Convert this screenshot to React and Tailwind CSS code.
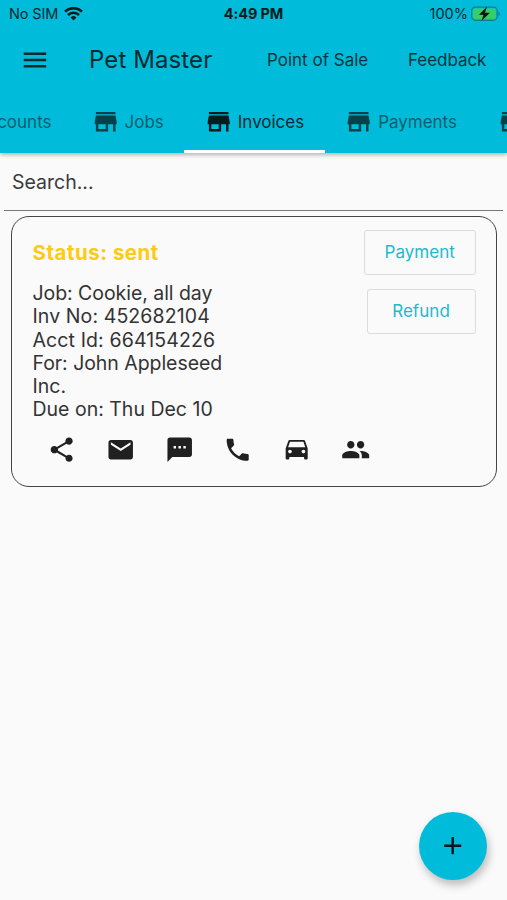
import React from "react";
import {
  MdAdd,
  MdEmail,
  MdMenu,
  MdPeople,
  MdPhone,
  MdShare,
  MdTextsms,
} from "react-icons/md";

function StoreIcon({ className }) {
  return (
    <svg viewBox="0 0 24 24" fill="currentColor" className={className}>
      <path d="M20 4H4v2h16V4zm1 10v-2l-1-5H4l-1 5v2h1v6h10v-6h4v6h2v-6h1zm-9 4H6v-4h6v4z" />
    </svg>
  );
}

function CarIcon({ className }) {
  return (
    <svg viewBox="0 0 24 24" fill="currentColor" className={className}>
      <path d="M18.92 5.01C18.72 4.42 18.16 4 17.5 4h-11c-.66 0-1.21.42-1.42 1.01L3 11v8c0 .55.45 1 1 1h1c.55 0 1-.45 1-1v-1h12v1c0 .55.45 1 1 1h1c.55 0 1-.45 1-1v-8l-2.08-5.99zM6.5 15c-.83 0-1.5-.67-1.5-1.5S5.67 12 6.5 12s1.5.67 1.5 1.5S7.33 15 6.5 15zm11 0c-.83 0-1.5-.67-1.5-1.5s.67-1.5 1.5-1.5 1.5.67 1.5 1.5-.67 1.5-1.5 1.5zM5 10l1.5-4.5h11L19 10H5z" />
    </svg>
  );
}

const actions = [
  { label: "Share", Icon: MdShare },
  { label: "Email", Icon: MdEmail },
  { label: "Message", Icon: MdTextsms },
  { label: "Call", Icon: MdPhone },
  { label: "Drive", Icon: CarIcon },
  { label: "Contacts", Icon: MdPeople },
];

function WifiIcon() {
  return (
    <svg width="19" height="14" viewBox="0 0 19 14" fill="none" stroke="#06191c">
      <path d="M1 4.6a12.2 12.2 0 0 1 17 0" strokeWidth="2.6" />
      <path d="M4 8a7.9 7.9 0 0 1 11 0" strokeWidth="2.5" />
      <path d="M9.5 13.4 6.6 10.5a4.1 4.1 0 0 1 5.8 0Z" fill="#06191c" stroke="none" />
    </svg>
  );
}

function BatteryIcon() {
  return (
    <svg width="30" height="16" viewBox="0 0 30 16">
      <rect x="0.6" y="1.1" width="25.6" height="13.2" rx="3.8" fill="none" stroke="#087f90" strokeWidth="1.2" />
      <rect x="2" y="2.5" width="22.8" height="10.4" rx="2.4" fill="#35cf68" />
      <path d="M27.4 5.4v4.6c1.9-.7 1.9-3.9 0-4.6Z" fill="#087f90" />
      <path d="M15.9 0.8 8 8.7h4.5l-2 6.3 8.4-8.2h-4.9Z" fill="#001214" />
    </svg>
  );
}

function StatusBar() {
  return (
    <div className="flex h-7 items-center justify-between text-[14.5px] text-[#06292e]">
      <div className="flex w-[150px] items-center pl-[9px]">
        <span className="w-[55px] whitespace-nowrap tracking-[-0.15px]">No SIM</span>
        <WifiIcon />
      </div>
      <span className="whitespace-nowrap font-bold tracking-[-0.1px] text-[#041d21]">4:49 PM</span>
      <div className="flex w-[150px] items-center justify-end gap-[3px] pr-[6px]">
        <span>100%</span>
        <BatteryIcon />
      </div>
    </div>
  );
}

function Tab({ label, active }) {
  return (
    <div
      className={`flex h-full shrink-0 items-center border-b-[3px] pl-[19.5px] pr-[20.5px] pt-[2px] ${
        active ? "border-white text-[#05282d]" : "border-transparent text-[#075f6b]"
      }`}
    >
      <StoreIcon className={`size-[29.4px] ${active ? "text-[#041b1f]" : "text-[#04414a]"}`} />
      <span className="ml-[4.7px] whitespace-nowrap pt-px text-[17px] tracking-[-0.03px]">{label}</span>
    </div>
  );
}

function Header() {
  return (
    <header className="relative z-10 flex h-[153px] flex-col bg-[#00bcda] shadow-[0_2px_4px_rgba(0,0,0,0.28)]">
      <StatusBar />
      <div className="flex h-[64px] items-center text-[#04353c]">
        <button className="ml-[20px]" aria-label="Menu">
          <MdMenu className="size-[30px] text-[#03282d]" />
        </button>
        <h1 className="ml-[39px] w-[178px] whitespace-nowrap text-[24px] tracking-[0.1px] text-[#042a30]">Pet Master</h1>
        <button className="w-[141px] whitespace-nowrap pt-px text-left text-[17px]">Point of Sale</button>
        <button className="whitespace-nowrap pt-px text-[17px] tracking-[-0.05px]">Feedback</button>
      </div>
      <nav className="flex flex-1 overflow-hidden">
        <div className="flex w-[71px] shrink-0 items-center justify-end pr-[19.5px] text-[17px] text-[#075f6b]">
          <span className="whitespace-nowrap">Accounts</span>
        </div>
        <Tab label="Jobs" />
        <Tab label="Invoices" active />
        <Tab label="Payments" />
        <Tab label="Estimates" />
      </nav>
    </header>
  );
}

function InvoiceCard() {
  return (
    <section className="mx-[10.5px] mt-[5px] flex h-[271px] flex-col rounded-[18px] border border-[#444] pl-[21px] pr-[20px] pt-[13px]">
      <div className="flex h-[192px] justify-between">
        <div className="whitespace-nowrap pt-[10px]">
          <h2 className="text-[20.5px] font-bold leading-[26px] tracking-[0.5px] text-[#fdcb12]">Status: sent</h2>
          <div className="mt-[16px] text-[19.5px] leading-[23.25px] text-[#333]">
            <p className="tracking-[-0.05px]">Job: Cookie, all day</p>
            <p className="tracking-[0.1px]">Inv No: 452682104</p>
            <p className="tracking-[0.12px]">Acct Id: 664154226</p>
            <p className="tracking-[-0.05px]">For: John Appleseed</p>
            <p>Inc.</p>
            <p>Due on: Thu Dec 10</p>
          </div>
        </div>
        <div className="flex flex-col items-end gap-[13.5px] text-[17px] tracking-[0.05px] text-[#21b9d1]">
          <button className="h-[45px] w-[111.5px] rounded-[3px] border border-[#dcdcdc] pt-px">Payment</button>
          <button className="h-[45px] w-[109px] rounded-[3px] border border-[#dcdcdc] pt-px">Refund</button>
        </div>
      </div>
      <div className="flex">
        {actions.map(({ label, Icon }) => (
          <button key={label} aria-label={label} className="flex h-[56px] w-[58.7px] items-center justify-center">
            <Icon className="size-[29.4px] text-[#202020]" />
          </button>
        ))}
      </div>
    </section>
  );
}

export default function App() {
  return (
    <div className="relative flex h-[900px] w-[507px] flex-col overflow-hidden bg-[#fafafa] font-['Inter',sans-serif]">
      <Header />
      <div className="mx-[4px] flex h-[58px] items-center border-b border-[#777] pl-[8px] pt-[2px] text-[19.5px] text-[#3a3a3a]">
        Search...
      </div>
      <InvoiceCard />
      <button
        aria-label="Add"
        className="absolute bottom-[20px] right-[20px] flex size-[68px] items-center justify-center rounded-full bg-[#00bcda] shadow-[2px_5px_8px_rgba(0,0,0,0.25)]"
      >
        <MdAdd className="size-[29.4px] text-[#02171a]" />
      </button>
    </div>
  );
}
